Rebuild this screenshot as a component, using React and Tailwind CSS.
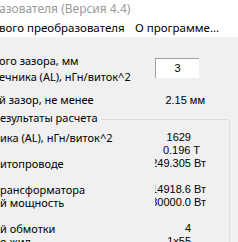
import React from "react";

const valueFont = { fontFamily: '"Liberation Sans", Arial, sans-serif' };

function Row({ label, value, right = 205, width = 51 }) {
    return (
        <div className="relative flex h-[13px] items-center leading-[13px]">
            <span className="w-[150px] shrink-0 whitespace-nowrap -ml-[1px]">{label}</span>
            <div
                className="absolute top-0 flex justify-end overflow-hidden whitespace-nowrap text-[11px] leading-[13px]"
                style={{ ...valueFont, left: right - width, width }}
            >
                {value}
            </div>
        </div>
    );
}

export default function App() {
    const rows = [
        { label: "ика (AL), нГн/виток^2", value: "1629", right: 190 },
        { label: "", value: "0.196 T", right: 199 },
        { label: "итопроводе", value: "249.305 Вт", right: 205 },
        { label: "", value: "" },
        { label: "рансформатора", value: "14918.6 Вт", right: 205 },
        { label: "й мощность", value: "30000.0 Вт", right: 205 },
        { label: "", value: "" },
        { label: "й обмотки", value: "4", right: 190 },
        { label: "о жил", value: "1x55", right: 190 },
    ];

    return (
        <div
            className="relative w-[238px] h-[242px] overflow-hidden bg-[#f0f0f0] text-[11px] text-black"
            style={{ fontFamily: '"Noto Sans", "Open Sans", sans-serif' }}
        >
            {/* title bar */}
            <div className="h-[18px] bg-white text-[#9a9a9a] text-[12px] leading-[17px] whitespace-nowrap -ml-[1px]">
                азователя (Версия 4.4)
            </div>
            {/* menu */}
            <div className="h-[20px] bg-white flex items-center whitespace-nowrap text-[11.5px] border-b border-[#f5f5f5]">
                <span className="w-[136px] shrink-0 -ml-[1px]">вого преобразователя</span>
                <span>О программе...</span>
            </div>

            {/* inputs */}
            <div className="flex mt-[16px]">
                <div className="w-[155px] shrink-0">
                    <div className="h-[14px] leading-[14px] whitespace-nowrap -ml-[1px]">ого зазора, мм</div>
                    <div className="h-[14px] leading-[14px] mt-[2px] whitespace-nowrap -ml-[1px]">ечника (AL), нГн/виток^2</div>
                </div>
                <div
                    className="mt-[4px] w-[44px] h-[20px] bg-white border-t border-l border-[#a0a0a0] flex items-center justify-center text-[11px]"
                    style={valueFont}
                >
                    3
                </div>
            </div>

            <div className="relative flex h-[14px] mt-[9px] items-center leading-[14px]">
                <span className="whitespace-nowrap -ml-[1px]">й зазор, не менее</span>
                <div className="absolute top-0 left-[154px] w-[51px] flex justify-end whitespace-nowrap text-[11px]" style={valueFont}>
                    2.15 мм
                </div>
            </div>

            {/* results group */}
            <div className="relative mt-[12px] -ml-[10px] w-[240px] h-[200px] border border-[#dcdcdc] rounded-[2px] pt-[11px] pl-[10px]">
                <div className="absolute top-[-9px] left-[9px] h-[14px] leading-[14px] pr-[3px] bg-[#f0f0f0] whitespace-nowrap">
                    езультаты расчета
                </div>
                {rows.map((r, i) => (
                    <Row key={i} label={r.label} value={r.value} right={r.right || 205} />
                ))}
            </div>
        </div>
    );
}
